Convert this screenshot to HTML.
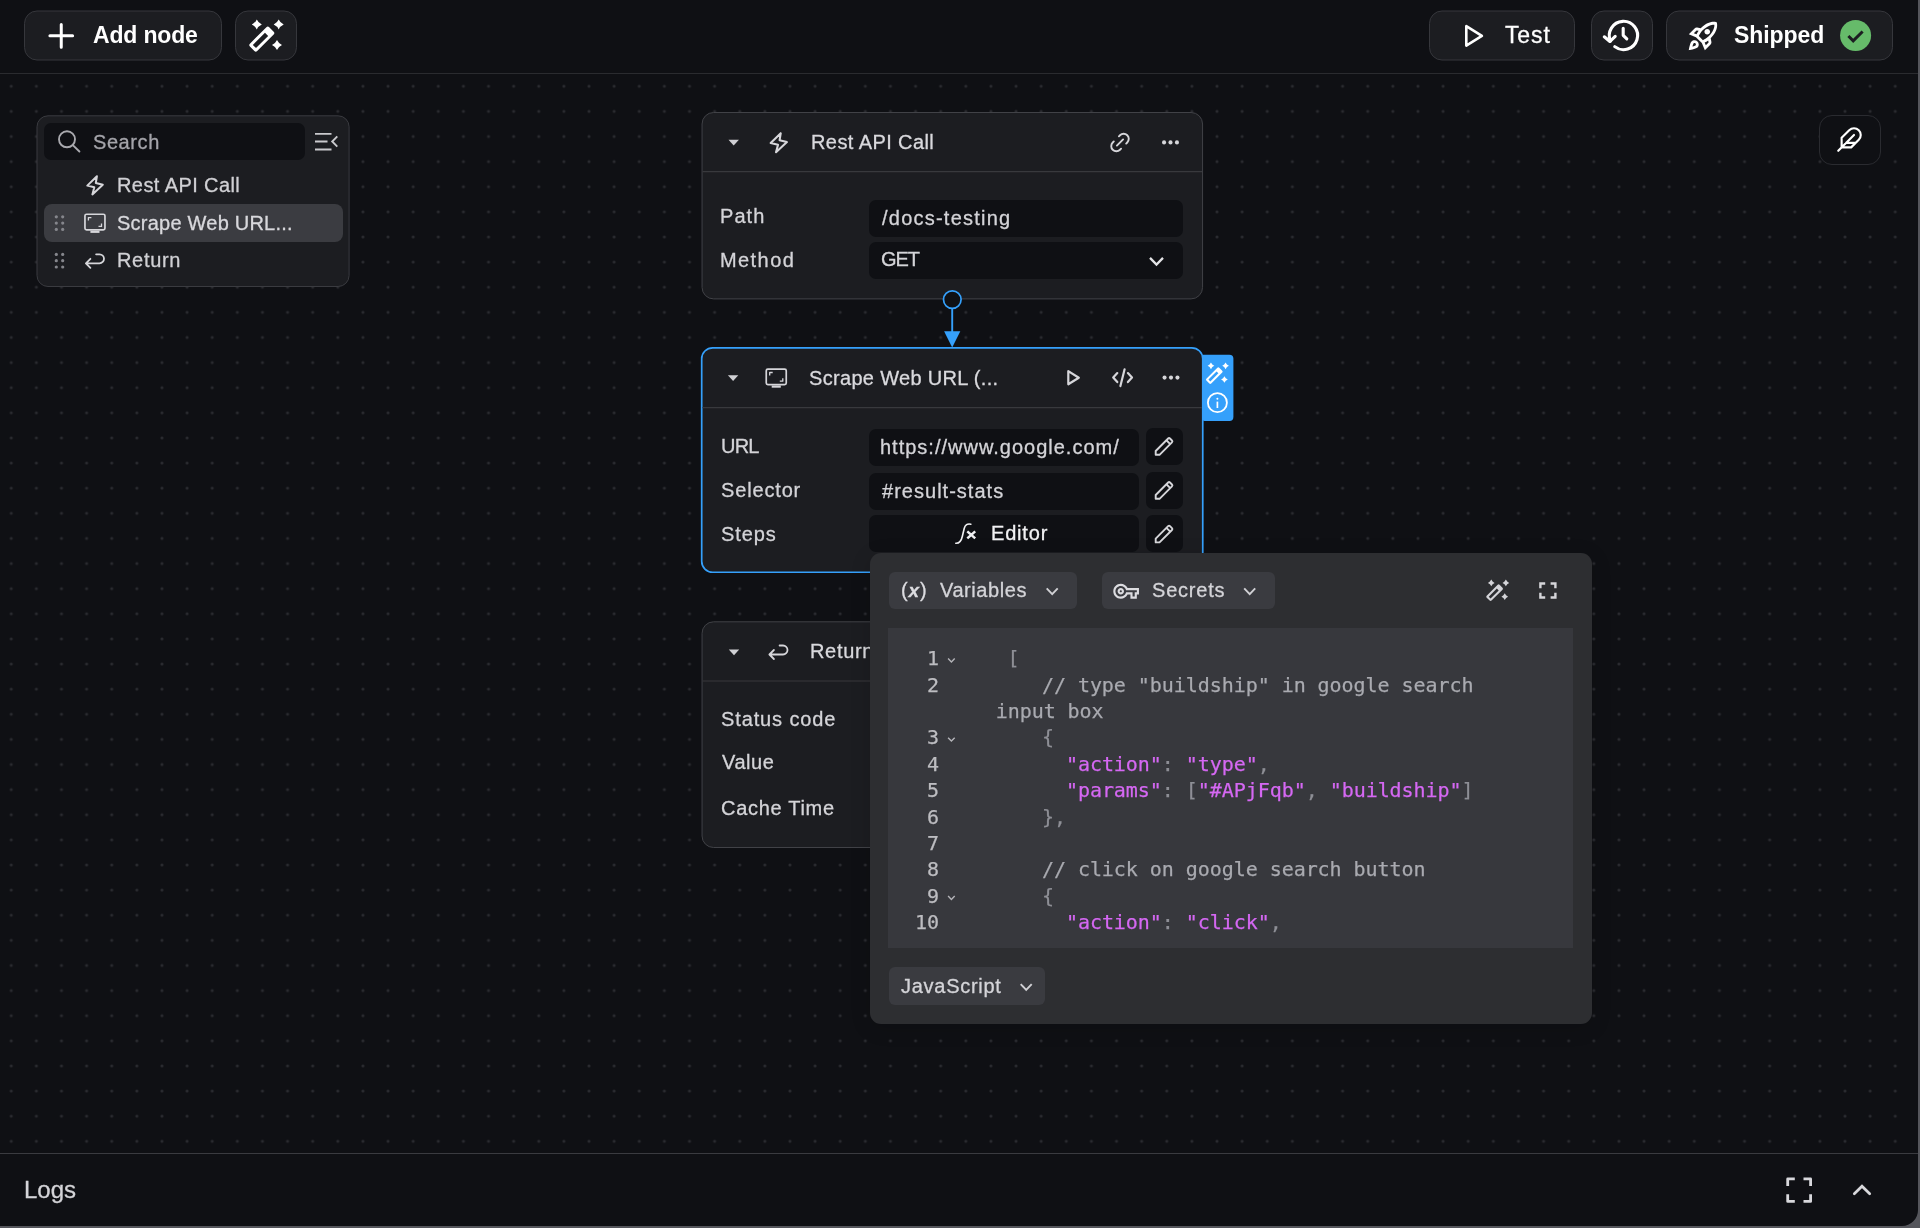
<!DOCTYPE html>
<html lang="en">
<head>
<meta charset="utf-8">
<title>Workflow</title>
<style>
*{box-sizing:border-box;margin:0;padding:0}
html,body{width:1920px;height:1228px;overflow:hidden;background:#0f1014}
body{font-family:"Liberation Sans",sans-serif;color:#dedee2;position:relative}
.abs{position:absolute}
.t{position:absolute;white-space:nowrap;line-height:1;will-change:transform;-webkit-text-stroke:0.3px}
svg{position:absolute;overflow:visible;left:0;top:0}
#canvas{position:absolute;left:0;top:0;width:1918px;height:1226px}
#topbar{position:absolute;left:0;top:0;width:1918px;height:74px;background:#0f1014;border-bottom:1px solid #2a2b2f}
#logs{position:absolute;left:0;top:1153px;width:1918px;height:73px;background:#0f1014;border-top:1px solid #3a3b40}
.node{position:absolute;background:#1c1d21;border:1px solid #414247;border-radius:11px}
.hsep{position:absolute;height:1px;background:#38393d}
.inp{position:absolute;background:#0f1014;border-radius:7px}
.pbtn{position:absolute;background:#3a3b40;border-radius:6px}
.code{position:absolute;white-space:pre;font-family:"DejaVu Sans Mono","Liberation Mono",monospace;font-size:20px;line-height:26px;color:#a9aab0;letter-spacing:-0.055px;will-change:transform;-webkit-text-stroke:0.25px}
.code b{font-weight:400;color:#d568f3}
.code i{font-style:normal;color:#8e8f96}
.ln{position:absolute;font-family:"DejaVu Sans Mono","Liberation Mono",monospace;font-size:20px;line-height:26px;color:#bdbdc1;text-align:right;width:60px;will-change:transform;-webkit-text-stroke:0.25px}
</style>
</head>
<body>
<svg id="canvas" width="1918" height="1226" viewBox="0 0 1918 1226"><defs><pattern id="dots" x="-1.310" y="-1.670" width="25.120" height="25.120" patternUnits="userSpaceOnUse"><circle cx="12.560" cy="12.560" r="1.500" fill="#2a2b30"/></pattern></defs><rect width="1918" height="1226" fill="url(#dots)"/></svg>
<div id="topbar"></div>
<div id="logs"></div>

<svg width="1920" height="180" viewBox="0 0 1920 180">
<rect x="24.5" y="11.0" width="197" height="49" rx="12.500" fill="#1c1d21" stroke="#36373c" stroke-width="1"/><rect x="235.5" y="11.0" width="61" height="49" rx="12.500" fill="#1c1d21" stroke="#36373c" stroke-width="1"/><rect x="1429.5" y="11.0" width="145" height="49" rx="12.500" fill="#1c1d21" stroke="#36373c" stroke-width="1"/><rect x="1591.5" y="11.0" width="61" height="49" rx="12.500" fill="#1c1d21" stroke="#36373c" stroke-width="1"/><rect x="1666.5" y="11.0" width="226" height="49" rx="12.500" fill="#1c1d21" stroke="#36373c" stroke-width="1"/><rect x="1819.5" y="115.5" width="61" height="49" rx="12.500" fill="#0f1014" stroke="#2a2b30" stroke-width="1"/>
<path d="M61.250 24.400V47.200M49.900 35.800H72.600" stroke="#fff" stroke-width="3" stroke-linecap="round" fill="none"/>
<g transform="translate(266 35.5) scale(1.0)" fill="#fff"><path d="M-9.2 -16.1Q-7.65 -12.65 -4.199999999999999 -11.1Q-7.65 -9.55 -9.2 -6.1Q-10.75 -9.55 -14.2 -11.1Q-10.75 -12.65 -9.2 -16.1ZM12.7 -16.1Q14.25 -12.65 17.7 -11.1Q14.25 -9.55 12.7 -6.1Q11.15 -9.55 7.699999999999999 -11.1Q11.15 -12.65 12.7 -16.1ZM11 4.5Q12.55 7.95 16.0 9.5Q12.55 11.05 11 14.5Q9.45 11.05 6.0 9.5Q9.45 7.95 11 4.5Z"/><path transform="translate(-4.200 3.600) rotate(-45)" fill-rule="evenodd" d="M-11.650 -5.150H11.650A2 2 0 0 1 13.650 -3.150V3.150A2 2 0 0 1 11.650 5.150H-11.650A2 2 0 0 1 -13.650 3.150V-3.150A2 2 0 0 1 -11.650 -5.150ZM-10.450 -2.25V2.25H6.750V-2.25Z"/></g>
<path d="M1466.300 26.200V45.600L1481.900 35.900Z" fill="none" stroke="#fff" stroke-width="2.600" stroke-linejoin="round"/>
<g fill="none" stroke="#fff" stroke-width="3.100" stroke-linecap="round" stroke-linejoin="round"><path d="M1610.520 41.200A14.150 14.150 0 1 1 1614.740 46.610"/><path d="M1604.300 36.800L1609.900 41.500L1615.200 36.300"/><path d="M1623.200 28.200V35.300L1626.800 38.900"/></g>
<g transform="translate(1686 19) scale(1.417)"><path fill="#fff" d="M6 15c-.83 0-1.580.34-2.120.88C2.700 17.060 2 22 2 22s4.940-.7 6.120-1.880C8.660 19.580 9 18.830 9 18c0-1.660-1.340-3-3-3zm.71 3.710c-.28.28-2.170.76-2.170.76s.47-1.880.76-2.170c.17-.19.42-.3.7-.3.550 0 1 .45 1 1 0 .28-.11.53-.29.710zm10.710-5.060c6.360-6.360 4.240-11.310 4.240-11.310S16.710.22 10.350 6.580l-2.490-.5c-.65-.13-1.330.08-1.810.55L2 10.690l5 2.140L11.170 17l2.140 5 4.050-4.050c.47-.47.68-1.150.55-1.810l-.49-2.490zM7.410 10.830l-1.910-.82 1.970-1.970 1.440.29c-.57.83-1.080 1.700-1.500 2.500zm6.580 7.670l-.82-1.910c.8-.42 1.670-.93 2.490-1.500l.29 1.440-1.960 1.970zM16 12.240c-1.320 1.320-3.380 2.400-4.040 2.730l-2.930-2.930c.32-.65 1.400-2.710 2.730-4.040 4.680-4.680 8.230-3.990 8.230-3.990s.69 3.550-3.990 8.230zM15 11c1.100 0 2-.9 2-2s-.9-2-2-2-2 .9-2 2 .9 2 2 2z"/></g>
<circle cx="1855.600" cy="35.500" r="15.500" fill="#66bb6a"/><path d="M1848.400 36l4.800 4.800L1862.600 31.500" stroke="#1c1d21" stroke-width="3" fill="none"/>
<g transform="translate(1836 126) scale(1.125)"><path d="M20.240 12.240a6 6 0 0 0-8.490-8.490L5 10.500V19h8.500zM16 8 2 22M17.500 15H9" stroke="#fff" stroke-width="1.900" fill="none" stroke-linecap="round" stroke-linejoin="round"/></g>
</svg>
<div class="t" style="left:92.60px;top:24px;font-size:23px;letter-spacing:-0.17px;color:#fff;font-weight:700;-webkit-text-stroke:0;">Add node</div>
<div class="t" style="left:1504.55px;top:24px;font-size:23px;letter-spacing:0.87px;color:#fff;font-weight:400;">Test</div>
<div class="t" style="left:1734.44px;top:24px;font-size:23px;letter-spacing:-0.08px;color:#fff;font-weight:700;-webkit-text-stroke:0;">Shipped</div>
<svg width="400" height="300" viewBox="0 0 400 300"><rect x="37.0" y="115.8" width="312.10" height="170.70" rx="11" fill="#1c1d21" stroke="#3a3b40" stroke-width="1"/></svg>
<div class="inp" style="left:44px;top:123px;width:260.500px;height:37px"></div>
<div class="abs" style="left:44px;top:204px;width:298.500px;height:38px;border-radius:8px;background:#3b3c41"></div>
<svg width="360" height="300" viewBox="0 0 360 300">
<g fill="none" stroke="#a9a9ae" stroke-width="1.900" stroke-linecap="round"><circle cx="67" cy="139.300" r="8"/><path d="M72.800 145.100L79.400 151.500"/></g>
<path d="M315 133.900H331.500M315 141.500H327.500M315 149.500H331.500M337.300 136.300L332.200 141.500L337.300 146.700" fill="none" stroke="#c9c9cd" stroke-width="1.900"/>
<path transform="translate(86 175) scale(1.0)" d="M10.900 1.300L1.300 10.600L8.300 12.300L6.400 19.400L16.800 9.800L9.800 8Z" fill="none" stroke="#d6d6da" stroke-width="2.0" stroke-linejoin="round"/>
<g fill="#85868c"><circle cx="56.3" cy="216.8" r="1.6"/><circle cx="56.3" cy="223.1" r="1.6"/><circle cx="56.3" cy="229.4" r="1.6"/><circle cx="62.7" cy="216.8" r="1.6"/><circle cx="62.7" cy="223.1" r="1.6"/><circle cx="62.7" cy="229.4" r="1.6"/><circle cx="56.3" cy="254.4" r="1.6"/><circle cx="56.3" cy="260.7" r="1.6"/><circle cx="56.3" cy="267.0" r="1.6"/><circle cx="62.7" cy="254.4" r="1.6"/><circle cx="62.7" cy="260.7" r="1.6"/><circle cx="62.7" cy="267.0" r="1.6"/></g>
<g fill="none" stroke="#d6d6da" stroke-linejoin="round"><rect x="84.94999999999999" y="214.25" width="20" height="15.600" rx="1.600" stroke-width="1.700"/><path d="M88.39999999999999 220.6V217.70000000000002H91.39999999999999M101.5 223.4V226.4H98.5" stroke-width="1.300"/><path d="M90.39999999999999 231.8H99.5" stroke-width="2.200"/></g>
<path transform="translate(84.7 253.4)" d="M11.400 0.900H14.800A4.500 4.500 0 0 1 14.800 9.900H1.300M5.700 5.400L1.200 9.900L5.700 14.400" fill="none" stroke="#d6d6da" stroke-width="1.8" stroke-linecap="round" stroke-linejoin="round"/>
</svg>
<div class="t" style="left:93.00px;top:132px;font-size:20px;letter-spacing:0.58px;color:#a4a4aa;font-weight:400;">Search</div>
<div class="t" style="left:117.42px;top:175px;font-size:20px;letter-spacing:0.41px;color:#d0d0d4;font-weight:400;">Rest API Call</div>
<div class="t" style="left:117.30px;top:213px;font-size:20px;letter-spacing:0.23px;color:#d8d8dc;font-weight:400;">Scrape Web URL...</div>
<div class="t" style="left:117.42px;top:250px;font-size:20px;letter-spacing:0.68px;color:#d0d0d4;font-weight:400;">Return</div>
<svg width="1300" height="900" viewBox="0 0 1300 900"><rect x="702.05" y="112.5" width="500.50" height="186.40" rx="11.5" fill="#1c1d21" stroke="#414247" stroke-width="1"/><path d="M702.500 171.600H1202" stroke="#38393d" stroke-width="1.200"/><rect x="702.05" y="621.8" width="500.50" height="225.70" rx="11.5" fill="#1c1d21" stroke="#414247" stroke-width="1"/><path d="M702.500 681H1202" stroke="#38393d" stroke-width="1.200"/></svg>
<div class="inp" style="left:869px;top:200px;width:314px;height:36.600px"></div>
<div class="inp" style="left:869px;top:242.400px;width:314px;height:36.600px"></div>
<svg width="1300" height="600" viewBox="0 0 1300 600"><rect x="701.700" y="347.800" width="501.050" height="224.450" rx="11" fill="#1c1d21" stroke="#35a0fb" stroke-width="1.700"/></svg>
<svg width="1300" height="600" viewBox="0 0 1300 600"><path d="M702.500 407.600H1202" stroke="#38393d" stroke-width="1.200"/></svg>
<div class="inp" style="left:869px;top:429px;width:270px;height:37.100px"></div>
<div class="inp" style="left:1145.500px;top:427.5px;width:37.500px;height:37.300px"></div>
<div class="inp" style="left:869px;top:473px;width:270px;height:37.100px"></div>
<div class="inp" style="left:1145.500px;top:471.5px;width:37.500px;height:37.300px"></div>
<div class="inp" style="left:869px;top:515.3px;width:270px;height:37.100px"></div>
<div class="inp" style="left:1145.500px;top:515.2px;width:37.500px;height:37.300px"></div>
<svg width="1300" height="600" viewBox="0 0 1300 600"><path d="M1202.500 354.800H1229.400A4 4 0 0 1 1233.400 358.800V417A4 4 0 0 1 1229.400 421H1204.500A2 2 0 0 1 1202.500 419Z" fill="#35a0fb"/></svg>
<svg width="1300" height="900" viewBox="0 0 1300 900">
<path d="M952.200 309V333" stroke="#35a0fb" stroke-width="1.900" fill="none"/><path d="M944.100 331.200H960.300L952.200 347.500Z" fill="#35a0fb"/>
<circle cx="952.300" cy="299.600" r="8.800" fill="#0f1014" stroke="#35a0fb" stroke-width="1.700"/>
<path d="M728.5 139.7H738.9000000000001L733.7 145.4Z" fill="#d0d0d4"/>
<path transform="translate(769.3 131.8) scale(1.05)" d="M10.900 1.300L1.300 10.600L8.300 12.300L6.400 19.400L16.800 9.800L9.800 8Z" fill="none" stroke="#d6d6da" stroke-width="2.0" stroke-linejoin="round"/>
<g transform="translate(1120 142.500) rotate(-45) scale(0.95)" fill="none" stroke="#d6d6da" stroke-width="2" stroke-linecap="round"><path d="M-3.800 -5.400H-5.400A5.400 5.400 0 0 0 -5.400 5.400H-3.800M3.800 -5.400H5.400A5.400 5.400 0 0 1 5.400 5.400H3.800M-4.600 0H4.600"/></g>
<circle cx="1164.05" cy="142.4" r="2.050" fill="#d6d6da"/><circle cx="1170.5" cy="142.4" r="2.050" fill="#d6d6da"/><circle cx="1176.95" cy="142.4" r="2.050" fill="#d6d6da"/>
<path d="M1150.0 257.9L1156.5 264.5L1163.0 257.9" fill="none" stroke="#e4e4e7" stroke-width="2.3"/>
<path d="M727.9 375.2H738.3000000000001L733.1 380.9Z" fill="#d0d0d4"/>
<g fill="none" stroke="#d6d6da" stroke-linejoin="round"><rect x="766.25" y="369.05" width="20" height="15.600" rx="1.600" stroke-width="1.700"/><path d="M769.6999999999999 375.4V372.5H772.6999999999999M782.8 378.2V381.2H779.8" stroke-width="1.300"/><path d="M771.6999999999999 386.59999999999997H780.8" stroke-width="2.200"/></g>
<path d="M1068.300 371.100V384.300L1078.800 377.700Z" fill="none" stroke="#d6d6da" stroke-width="2.200" stroke-linejoin="round"/>
<path d="M1117.300 373.100L1113.200 377.600L1117.300 382.100M1127.900 373.100L1132 377.600L1127.900 382.100M1124.600 369.300L1120.400 386.100" fill="none" stroke="#d6d6da" stroke-width="2.200" stroke-linecap="round" stroke-linejoin="round"/>
<circle cx="1164.55" cy="377.6" r="2.050" fill="#d6d6da"/><circle cx="1171" cy="377.6" r="2.050" fill="#d6d6da"/><circle cx="1177.45" cy="377.6" r="2.050" fill="#d6d6da"/>
<g transform="translate(1163.3999999999999 447.09999999999997) rotate(-45)" fill="none" stroke="#d6d6da" stroke-width="1.900" stroke-linejoin="round"><path d="M-10.900 0L-8.200 -2.700H9.400A1.300 1.300 0 0 1 10.700 -1.400V1.400A1.300 1.300 0 0 1 9.400 2.700H-8.200ZM7 -2.700V2.700"/></g>
<g transform="translate(1163.3999999999999 491.09999999999997) rotate(-45)" fill="none" stroke="#d6d6da" stroke-width="1.900" stroke-linejoin="round"><path d="M-10.900 0L-8.200 -2.700H9.400A1.300 1.300 0 0 1 10.700 -1.400V1.400A1.300 1.300 0 0 1 9.400 2.700H-8.200ZM7 -2.700V2.700"/></g>
<g transform="translate(1163.3999999999999 534.6999999999999) rotate(-45)" fill="none" stroke="#d6d6da" stroke-width="1.900" stroke-linejoin="round"><path d="M-10.900 0L-8.200 -2.700H9.400A1.300 1.300 0 0 1 10.700 -1.400V1.400A1.300 1.300 0 0 1 9.400 2.700H-8.200ZM7 -2.700V2.700"/></g>
<g fill="none" stroke="#f0f0f2" stroke-linecap="round"><path d="M955.800 543.200C959.600 543.500 961.300 541 962.300 536.500L964.200 528.500C965.100 525 967.400 523.300 970.800 524.200" stroke-width="1.600"/><path d="M967.300 531.400L975.200 538.400M975.200 531.400L967.300 538.400" stroke-width="2.500" stroke-linecap="butt"/></g>
<g transform="translate(1217.1 373.2) scale(0.667)" fill="#fff"><path d="M-9.2 -16.1Q-7.65 -12.65 -4.199999999999999 -11.1Q-7.65 -9.55 -9.2 -6.1Q-10.75 -9.55 -14.2 -11.1Q-10.75 -12.65 -9.2 -16.1ZM12.7 -16.1Q14.25 -12.65 17.7 -11.1Q14.25 -9.55 12.7 -6.1Q11.15 -9.55 7.699999999999999 -11.1Q11.15 -12.65 12.7 -16.1ZM11 4.5Q12.55 7.95 16.0 9.5Q12.55 11.05 11 14.5Q9.45 11.05 6.0 9.5Q9.45 7.95 11 4.5Z"/><path transform="translate(-4.200 3.600) rotate(-45)" fill-rule="evenodd" d="M-11.650 -5.150H11.650A2 2 0 0 1 13.650 -3.150V3.150A2 2 0 0 1 11.650 5.150H-11.650A2 2 0 0 1 -13.650 3.150V-3.150A2 2 0 0 1 -11.650 -5.150ZM-10.450 -2.0V2.0H6.750V-2.0Z"/></g>
<circle cx="1217.400" cy="402.700" r="9.500" fill="none" stroke="#fff" stroke-width="1.800"/><path d="M1217.400 401.600V408" stroke="#fff" stroke-width="1.700"/><circle cx="1217.400" cy="398.800" r="1" fill="#fff"/>
<path d="M728.8 649.5H739.2L734 655.1999999999999Z" fill="#d0d0d4"/>
<path transform="translate(768.2 644.6)" d="M11.400 0.900H14.800A4.500 4.500 0 0 1 14.800 9.900H1.300M5.700 5.400L1.200 9.900L5.700 14.400" fill="none" stroke="#d6d6da" stroke-width="1.8" stroke-linecap="round" stroke-linejoin="round"/>
</svg>
<div class="t" style="left:811.02px;top:132px;font-size:20px;letter-spacing:0.41px;color:#d9d9dd;font-weight:400;">Rest API Call</div>
<div class="t" style="left:720.32px;top:206px;font-size:20px;letter-spacing:1.07px;color:#d4d4d8;font-weight:400;">Path</div>
<div class="t" style="left:720.32px;top:250px;font-size:20px;letter-spacing:1.42px;color:#d4d4d8;font-weight:400;">Method</div>
<div class="t" style="left:881.90px;top:208px;font-size:20px;letter-spacing:1.23px;color:#d4d4d8;font-weight:400;">/docs-testing</div>
<div class="t" style="left:880.96px;top:249px;font-size:20px;letter-spacing:-1.13px;color:#d4d4d8;font-weight:400;">GET</div>
<div class="t" style="left:809.40px;top:368px;font-size:20px;letter-spacing:0.32px;color:#d9d9dd;font-weight:400;">Scrape Web URL (...</div>
<div class="t" style="left:720.51px;top:436px;font-size:20px;letter-spacing:-0.76px;color:#d4d4d8;font-weight:400;">URL</div>
<div class="t" style="left:720.70px;top:480px;font-size:20px;letter-spacing:0.84px;color:#d4d4d8;font-weight:400;">Selector</div>
<div class="t" style="left:720.70px;top:524px;font-size:20px;letter-spacing:0.89px;color:#d4d4d8;font-weight:400;">Steps</div>
<div class="t" style="left:880.36px;top:437px;font-size:20px;letter-spacing:1.0px;color:#d4d4d8;font-weight:400;">https://www.google.com/</div>
<div class="t" style="left:881.62px;top:481px;font-size:20px;letter-spacing:1.02px;color:#d4d4d8;font-weight:400;">#result-stats</div>
<div class="t" style="left:990.72px;top:523px;font-size:20px;letter-spacing:0.82px;color:#f2f2f4;font-weight:400;">Editor</div>
<div class="t" style="left:810.42px;top:641px;font-size:20px;letter-spacing:0.68px;color:#d9d9dd;font-weight:400;">Return</div>
<div class="t" style="left:720.50px;top:709px;font-size:20px;letter-spacing:0.88px;color:#d4d4d8;font-weight:400;">Status code</div>
<div class="t" style="left:721.55px;top:752px;font-size:20px;letter-spacing:0.54px;color:#d4d4d8;font-weight:400;">Value</div>
<div class="t" style="left:720.75px;top:798px;font-size:20px;letter-spacing:0.7px;color:#d4d4d8;font-weight:400;">Cache Time</div>
<div class="abs" style="left:869.700px;top:553px;width:722px;height:470.500px;background:#2d2e31;border-radius:11px;box-shadow:0 4px 20px rgba(0,0,0,.15)"></div>
<div class="pbtn" style="left:888.700px;top:571.700px;width:188.400px;height:37.200px"></div>
<div class="pbtn" style="left:1102.200px;top:571.700px;width:172.400px;height:37.200px"></div>
<div class="pbtn" style="left:888.500px;top:967.300px;width:156px;height:37.600px"></div>
<div class="abs" style="left:888.400px;top:628px;width:685px;height:320.300px;background:#37383d"></div>
<svg width="1620" height="1040" viewBox="0 0 1620 1040">
<path d="M1046.7 588.3000000000001L1052.2 594.1L1057.7 588.3000000000001" fill="none" stroke="#d0d0d4" stroke-width="1.9"/>
<path d="M1244.2 588.3000000000001L1249.7 594.1L1255.2 588.3000000000001" fill="none" stroke="#d0d0d4" stroke-width="1.9"/>
<path d="M1020.7 984.1L1026.2 989.9L1031.7 984.1" fill="none" stroke="#d0d0d4" stroke-width="1.9"/>
<g transform="translate(1113.300 578.400) scale(1.070)"><path fill="#dcdce0" d="M22 19h-6v-4h-2.680c-1.140 2.420-3.600 4-6.320 4-3.860 0-7-3.140-7-7s3.140-7 7-7c2.720 0 5.170 1.580 6.320 4H24v6h-2v4zm-4-2h2v-4h2v-2H11.940l-.23-.67C11.010 8.340 9.110 7 7 7c-2.760 0-5 2.240-5 5s2.240 5 5 5c2.110 0 4.010-1.340 4.710-3.330l.23-.67H18v4zM7 15c-1.650 0-3-1.350-3-3s1.350-3 3-3 3 1.350 3 3-1.350 3-3 3zm0-4c-.55 0-1 .45-1 1s.45 1 1 1 1-.45 1-1-.45-1-1-1z"/></g>
<g transform="translate(1497.4 590.3) scale(0.667)" fill="#d4d4d8"><path d="M-9.2 -16.1Q-7.65 -12.65 -4.199999999999999 -11.1Q-7.65 -9.55 -9.2 -6.1Q-10.75 -9.55 -14.2 -11.1Q-10.75 -12.65 -9.2 -16.1ZM12.7 -16.1Q14.25 -12.65 17.7 -11.1Q14.25 -9.55 12.7 -6.1Q11.15 -9.55 7.699999999999999 -11.1Q11.15 -12.65 12.7 -16.1ZM11 4.5Q12.55 7.95 16.0 9.5Q12.55 11.05 11 14.5Q9.45 11.05 6.0 9.5Q9.45 7.95 11 4.5Z"/><path transform="translate(-4.200 3.600) rotate(-45)" fill-rule="evenodd" d="M-11.650 -5.150H11.650A2 2 0 0 1 13.650 -3.150V3.150A2 2 0 0 1 11.650 5.150H-11.650A2 2 0 0 1 -13.650 3.150V-3.150A2 2 0 0 1 -11.650 -5.150ZM-10.450 -2.0V2.0H6.750V-2.0Z"/></g>
<path d="M1540.400 588.300V583.500H1545.200M1550.600 583.500H1555.400V588.300M1555.400 592.700V597.500H1550.600M1545.200 597.500H1540.400V592.700" fill="none" stroke="#d6d6da" stroke-width="2.400"/>
<path d="M948.1 658.5L951.4 661.9000000000001L954.6999999999999 658.5" fill="none" stroke="#b4b4b9" stroke-width="1.4"/>
<path d="M948.1 737.6999999999999L951.4 741.1L954.6999999999999 737.6999999999999" fill="none" stroke="#b4b4b9" stroke-width="1.4"/>
<path d="M948.1 896.0999999999999L951.4 899.5L954.6999999999999 896.0999999999999" fill="none" stroke="#b4b4b9" stroke-width="1.4"/>
</svg>
<div class="t" style="left:901.00px;top:580px;font-size:20px;letter-spacing:0.9px;color:#dcdce0;font-weight:400;">(<i style="font-style:italic;font-weight:700;font-size:19px">x</i>)</div>
<div class="t" style="left:939.65px;top:580px;font-size:20px;letter-spacing:0.57px;color:#d4d4d8;font-weight:400;">Variables</div>
<div class="t" style="left:1151.70px;top:580px;font-size:20px;letter-spacing:0.79px;color:#d4d4d8;font-weight:400;">Secrets</div>
<div class="t" style="left:901.11px;top:976px;font-size:20px;letter-spacing:0.72px;color:#d4d4d8;font-weight:400;">JavaScript</div>
<div class="ln" style="left:878.500px;top:645.10px">1</div>
<div class="code" style="left:993.8px;top:645.10px"> <i style="margin-left:1.5px">[</i></div>
<div class="ln" style="left:878.500px;top:671.50px">2</div>
<div class="code" style="left:993.8px;top:671.50px">    // type "buildship" in google search</div>
<div class="code" style="left:993.8px;top:697.90px"><span style="margin-left:1.7px">input box</span></div>
<div class="ln" style="left:878.500px;top:724.30px">3</div>
<div class="code" style="left:993.8px;top:724.30px">    <i>{</i></div>
<div class="ln" style="left:878.500px;top:750.70px">4</div>
<div class="code" style="left:993.8px;top:750.70px">      <b>"action"</b><i>:</i> <b>"type"</b><i>,</i></div>
<div class="ln" style="left:878.500px;top:777.10px">5</div>
<div class="code" style="left:993.8px;top:777.10px">      <b>"params"</b><i>:</i> <i>[</i><b>"#APjFqb"</b><i>,</i> <b>"buildship"</b><i>]</i></div>
<div class="ln" style="left:878.500px;top:803.50px">6</div>
<div class="code" style="left:993.8px;top:803.50px">    <i>},</i></div>
<div class="ln" style="left:878.500px;top:829.90px">7</div>
<div class="ln" style="left:878.500px;top:856.30px">8</div>
<div class="code" style="left:993.8px;top:856.30px">    // click on google search button</div>
<div class="ln" style="left:878.500px;top:882.70px">9</div>
<div class="code" style="left:993.8px;top:882.70px">    <i>{</i></div>
<div class="ln" style="left:878.500px;top:909.10px">10</div>
<div class="code" style="left:993.8px;top:909.10px">      <b>"action"</b><i>:</i> <b>"click"</b><i>,</i></div>
<div class="t" style="left:23.50px;top:1178px;font-size:24px;letter-spacing:0.0px;color:#d4d4d8;font-weight:400;">Logs</div>
<svg width="1920" height="1228" viewBox="0 0 1920 1228">
<path d="M1787.700 1186V1178.900H1794.800M1803.500 1178.900H1810.600V1186M1810.600 1194.300V1201.400H1803.500M1794.800 1201.400H1787.700V1194.300" fill="none" stroke="#d8d8dc" stroke-width="2.800" stroke-linejoin="round"/>
<path d="M1854.300 1193.800L1862 1186.200L1869.700 1193.800" fill="none" stroke="#d8d8dc" stroke-width="2.700" stroke-linecap="round"/>
<path d="M1918 0V1210A16 16 0 0 1 1902 1226H0V1228H1920V0Z" fill="#55565c"/>
</svg>
</body>
</html>
